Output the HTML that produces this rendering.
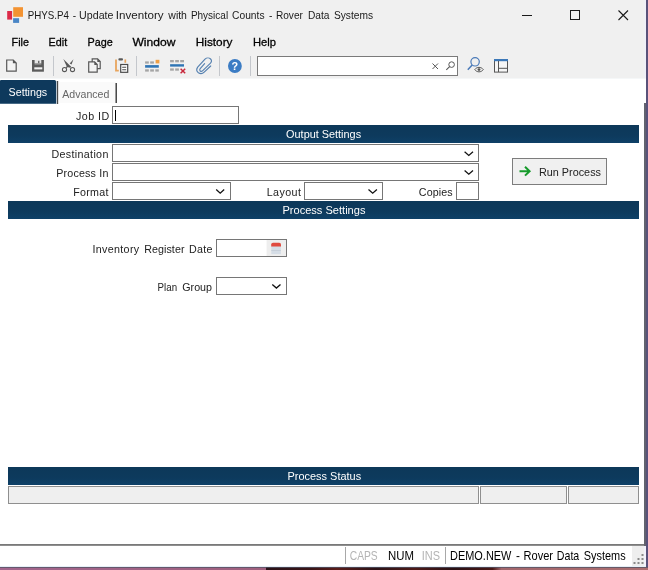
<!DOCTYPE html>
<html><head><meta charset="utf-8">
<style>
*{box-sizing:border-box;margin:0;padding:0}
html,body{width:648px;height:570px;overflow:hidden;background:#fff;font-family:"Liberation Sans",sans-serif;}
.abs{position:absolute}
#win{position:absolute;left:0;top:0;width:648px;height:570px;background:#fff;overflow:hidden}
.hdr{position:absolute;left:8px;width:631px;height:18px;background:linear-gradient(#0d3859 0%,#0d3a5d 60%,#0e4067 100%)}
.inp{position:absolute;background:#fff;border:1px solid #767676}
.sbox{position:absolute;top:486px;height:18px;background:#efefef;border:1px solid #8f8f8f}
.sep{position:absolute;top:56px;width:1px;height:20px;background:#c4c7cc}
</style></head><body>
<div id="win">
<div class="abs" style="left:0;top:0;width:646px;height:78px;background:#f0f0f0"></div>
<div class="abs" style="left:0;top:78px;width:646px;height:1px;background:#f5f7f8"></div>

<!-- tabs -->
<div class="abs" style="left:0;top:80px;width:56px;height:24px;background:linear-gradient(#0e395c 0,#0e395c 96%,#86a0b4 100%);border-radius:1px 1.5px 0 0"></div>
<div class="abs" style="left:56px;top:81px;width:3px;height:23px;background:linear-gradient(90deg,#b9c6d2 0,#b9c6d2 26%,#3c3c3c 27%,#505050 66%,#d0d0d0 67%,#ececec 100%)"></div>
<div class="abs" style="left:59px;top:82px;width:57px;height:21px;background:#fafafa"></div>
<div class="abs" style="left:115px;top:83px;width:2px;height:20px;background:linear-gradient(90deg,#9a9a9a 0,#9a9a9a 40%,#4a4a4a 41%,#4a4a4a 100%)"></div>

<!-- toolbar search -->
<div class="inp" style="left:257px;top:56px;width:201px;height:20px;border-color:#7a7a7a"></div>
<div class="sep" style="left:53px"></div>
<div class="sep" style="left:136px"></div>
<div class="sep" style="left:219px"></div>
<div class="sep" style="left:250px"></div>

<!-- Job ID -->
<div class="inp" style="left:112px;top:106px;width:127px;height:18px"></div>
<div class="abs" style="left:115px;top:110px;width:1px;height:11px;background:#000"></div>

<div class="hdr" style="top:125px"></div>
<div class="inp" style="left:112px;top:144px;width:367px;height:18px"></div>
<div class="inp" style="left:112px;top:163px;width:367px;height:18px"></div>
<div class="inp" style="left:112px;top:182px;width:119px;height:18px"></div>
<div class="inp" style="left:304px;top:182px;width:79px;height:18px"></div>
<div class="inp" style="left:456px;top:182px;width:23px;height:18px"></div>

<!-- Run process -->
<div class="abs" style="left:512px;top:158px;width:95px;height:27px;background:#f0f0f0;border:1px solid #7d7d7d"></div>

<div class="hdr" style="top:201px"></div>
<div class="inp" style="left:216px;top:239px;width:71px;height:18px"></div>
<div class="inp" style="left:216px;top:277px;width:71px;height:18px"></div>

<div class="hdr" style="top:467px"></div>
<div class="sbox" style="left:8px;width:471px"></div>
<div class="sbox" style="left:480px;width:87px"></div>
<div class="sbox" style="left:568px;width:71px"></div>

<!-- status bar -->
<div class="abs" style="left:0;top:544px;width:646px;height:2px;background:linear-gradient(#6e6e6e,#9a9a9a)"></div>
<div class="abs" style="left:345px;top:547px;width:1px;height:17px;background:#a8a8a8"></div>
<div class="abs" style="left:445px;top:547px;width:1px;height:17px;background:#a8a8a8"></div>
<div class="abs" style="left:632px;top:546px;width:12px;height:20px;background:#eeeeee"></div>

<!-- right border -->
<div class="abs" style="left:643px;top:0;width:3px;height:78px;background:linear-gradient(90deg,#f0f0f0,#eef0fa)"></div>
<div class="abs" style="left:646px;top:0;width:2px;height:570px;background:#59527a"></div>
<div class="abs" style="left:644px;top:103px;width:2px;height:443px;background:#62636f"></div>
<div class="abs" style="left:644px;top:546px;width:2px;height:21px;background:#f1f2fb"></div>
<!-- bottom -->
<div class="abs" style="left:0;top:566px;width:646px;height:1px;background:#e6eff7"></div>
<div class="abs" style="left:0;top:567px;width:648px;height:3px;background:linear-gradient(90deg,#a3658c 0,#a0607e 41%,#2a1218 41%,#3a1416 48%,#5a1c1a 52%,#2c1216 58%,#4e1a18 64%,#2a1014 70%,#4a1816 76%,#a3666c 77.4%,#ac6e70 100%)"></div>
<div class="abs" style="left:0;top:567px;width:648px;height:1px;background:rgba(80,84,100,0.75)"></div>

<svg class="abs" style="left:0;top:0;will-change:transform" width="648" height="570" viewBox="0 0 648 570">
<!-- logo -->
<rect x="13.2" y="7.2" width="9.8" height="9.6" fill="#f39332"/>
<rect x="7.2" y="11" width="4.9" height="8.6" fill="#dc2a48"/>
<rect x="13.1" y="18.2" width="6" height="4.7" fill="#4a86c6"/>
<!-- window controls -->
<path d="M522 15.5H532" stroke="#1a1a1a" stroke-width="1" fill="none"/>
<rect x="570.5" y="10.5" width="9" height="9" stroke="#1a1a1a" stroke-width="1" fill="none"/>
<path d="M618.5 10.5L628 20M628 10.5L618.5 20" stroke="#1a1a1a" stroke-width="1.1" fill="none"/>

<!-- new doc -->
<path d="M6.7 60H13.2L16.2 63V71.1H6.7Z" fill="#f4f4f4" stroke="#585858" stroke-width="1.2"/>
<path d="M12.9 59.6V63.3H16.6Z" fill="#585858"/>
<!-- save -->
<rect x="32" y="60" width="11.9" height="11.7" fill="#5c5c5c"/>
<rect x="34.6" y="60" width="6.7" height="3.6" fill="#e6e6e6"/>
<rect x="38.1" y="60.8" width="1.3" height="2.4" fill="#5c5c5c"/>
<rect x="34.6" y="63.6" width="6.7" height="1.2" fill="#8a8a8a"/>
<rect x="34.3" y="67.3" width="8" height="2.1" fill="#f2f2f2"/>
<!-- scissors -->
<path d="M63.3 59L71.2 66.7L70.3 67.8L67 66.9Z" fill="#585858"/>
<path d="M73.5 59.3L71.5 64.6L69.7 63.6Z" fill="#585858"/>
<path d="M68.4 65.8L66 67.7" stroke="#585858" stroke-width="1.1" fill="none"/>
<g fill="none" stroke="#585858" stroke-width="1.05">
<circle cx="64.5" cy="69.5" r="2.1"/><circle cx="72.5" cy="69.5" r="2.1"/>
</g>
<!-- copy -->
<g fill="#f3f3f3" stroke="#585858" stroke-width="1.2">
<path d="M92.2 58.9H97.6L100.2 61.6V68.6H92.2Z"/>
<path d="M88.7 61.9H94.6L97.2 64.6V72.2H88.7Z"/>
</g>
<path d="M97.3 58.6V61.9H100.5Z" fill="#585858"/>
<path d="M94.3 61.6V64.9H97.5Z" fill="#585858"/>
<!-- paste -->
<path d="M116 59.4V70.6H118.8" fill="none" stroke="#e8a55e" stroke-width="1.8"/>
<path d="M125.3 59.4V62.8" fill="none" stroke="#e8a55e" stroke-width="1.7"/>
<rect x="118.4" y="58.2" width="4.6" height="2.4" rx="1" fill="#5a5a5a"/>
<rect x="120.7" y="64.5" width="7" height="7.8" fill="#fff" stroke="#4a4a4a" stroke-width="1.2"/>
<path d="M122.2 67.2H126.2M122.2 69.8H126.2" stroke="#4a4a4a" stroke-width="1.1"/>
<!-- insert row -->
<g fill="#a5a5a5">
<rect x="145.1" y="61.4" width="3.7" height="2.2"/><rect x="150.2" y="61.4" width="3.7" height="2.2"/>
<rect x="145.1" y="69.3" width="3.7" height="2.3"/><rect x="150.2" y="69.3" width="3.7" height="2.3"/><rect x="155.3" y="69.3" width="3.5" height="2.3"/>
</g>
<rect x="145.1" y="65.1" width="13.7" height="2.6" fill="#2f75b5"/>
<rect x="155.6" y="59.8" width="3.8" height="3.6" fill="#f0a046"/>
<!-- delete row -->
<g fill="#a5a5a5">
<rect x="170.1" y="60" width="3.7" height="2.3"/><rect x="175.2" y="60" width="3.7" height="2.3"/><rect x="180.2" y="60" width="3.8" height="2.3"/>
<rect x="170.1" y="68.4" width="3.7" height="2.3"/><rect x="175.2" y="68.4" width="3.7" height="2.3"/>
</g>
<rect x="170.1" y="64.2" width="13.9" height="2.4" fill="#2f75b5"/>
<path d="M180.6 68.8L185.2 73.2M185.2 68.8L180.6 73.2" stroke="#c8283c" stroke-width="1.5" fill="none"/>
<!-- paperclip -->
<path d="M210.7 66L204.2 72.1C202.6 73.8 200.2 74 198.4 72.8C196.6 71.4 196.4 69 197.7 67.1L205 59.1C206.6 57.6 209.2 57.6 210.6 59C211.8 60.2 211.8 62 210.5 63.1L202.5 70.8C201.6 71.7 200.4 71.6 200 70.8C199.5 70 199.7 69.2 200.2 68.5L204.6 63.7" fill="none" stroke="#5580b0" stroke-width="1.15" stroke-linecap="round"/>
<!-- help -->
<circle cx="234.9" cy="66" r="6.9" fill="#3b7cc4"/>
<text x="234.9" y="69.8" font-family="'Liberation Sans', sans-serif" font-weight="bold" font-size="10.8" fill="#fff" text-anchor="middle">?</text>
<!-- search x & magnifier -->
<path d="M432.5 63.5L438 69M438 63.5L432.5 69" stroke="#555" stroke-width="1" fill="none"/>
<circle cx="451.6" cy="64.6" r="2.8" fill="none" stroke="#555" stroke-width="1"/>
<path d="M449.6 66.6L446.3 69.8" stroke="#555" stroke-width="1.1"/>
<!-- find/eye -->
<circle cx="475.1" cy="61.8" r="4.2" fill="none" stroke="#4a7ab8" stroke-width="1.2"/>
<path d="M472.2 64.9L467.8 69.8" stroke="#4a7ab8" stroke-width="1.5"/>
<path d="M474.8 69.6C476.8 66.6 481.2 66.6 483.3 69.6C481.2 72.6 476.8 72.6 474.8 69.6Z" fill="#f0f0f0" stroke="#555" stroke-width="1"/>
<circle cx="479" cy="69.6" r="1.4" fill="#555"/>
<!-- layout -->
<rect x="494.5" y="59.5" width="13" height="12.6" fill="#f6f6f6" stroke="#555" stroke-width="1"/>
<rect x="494" y="59" width="14" height="2.2" fill="#3c78b8"/>
<path d="M498.5 61V72M498.5 68.3H507.5" stroke="#555" stroke-width="1" fill="none"/>

<!-- dropdown chevrons -->
<g fill="none" stroke="#111" stroke-width="1.3">
<path d="M464.6 151.8L468.8 155.4L473 151.8"/>
<path d="M464.6 170.6L468.8 174.2L473 170.6"/>
<path d="M216.2 189.6L220.2 193.2L224.2 189.6"/>
<path d="M368.5 189.6L372.7 193.2L376.9 189.6"/>
<path d="M272.3 284.5L276.4 288.1L280.5 284.5"/>
</g>
<!-- calendar -->
<rect x="266.6" y="240" width="19.4" height="16" fill="#eeeeee"/>
<rect x="271.3" y="246" width="9.6" height="8.1" fill="#d5dde6"/>
<rect x="271.3" y="250" width="9.6" height="0.8" fill="#c3ccd6"/>
<path d="M271.2 246.6V244.6Q271.2 242.8 273 242.8H279.2Q281 242.8 281 244.6V246.6Z" fill="#e04a3f"/>
<!-- run arrow -->
<path d="M519.5 171.2H529M525 166.8L529.6 171.2L525 175.6" fill="none" stroke="#169a2b" stroke-width="2"/>
<!-- grip dots -->
<g fill="#8a8a8a">
<rect x="633.5" y="562" width="2" height="2"/><rect x="637.5" y="562" width="2" height="2"/><rect x="641.5" y="562" width="2" height="2"/>
<rect x="637.5" y="558" width="2" height="2"/><rect x="641.5" y="558" width="2" height="2"/>
<rect x="641.5" y="554" width="2" height="2"/>
</g>
</svg>

<svg class="abs" style="left:0;top:0;will-change:transform" width="648" height="570" viewBox="0 0 648 570" font-family="'Liberation Sans', sans-serif">
<text transform="translate(27.80,18.80) scale(0.8643,1)" font-size="11.3" fill="#1a1a1a">PHYS.P4</text>
<text transform="translate(72.70,18.80) scale(0.9000,1)" font-size="11.3" fill="#1a1a1a">-</text>
<text transform="translate(79.10,18.80) scale(0.9434,1)" font-size="11.3" fill="#1a1a1a">Update</text>
<text transform="translate(115.87,18.80) scale(1.0280,1)" font-size="11.3" fill="#1a1a1a">Inventory</text>
<text transform="translate(168.33,18.80) scale(0.9276,1)" font-size="11.3" fill="#1a1a1a">with</text>
<text transform="translate(190.90,18.80) scale(0.8856,1)" font-size="11.3" fill="#1a1a1a">Physical</text>
<text transform="translate(232.10,18.80) scale(0.9074,1)" font-size="11.3" fill="#1a1a1a">Counts</text>
<text transform="translate(269.10,18.80) scale(0.9000,1)" font-size="11.3" fill="#1a1a1a">-</text>
<text transform="translate(275.90,18.80) scale(0.8956,1)" font-size="11.3" fill="#1a1a1a">Rover</text>
<text transform="translate(307.90,18.80) scale(0.9032,1)" font-size="11.3" fill="#1a1a1a">Data</text>
<text transform="translate(333.90,18.80) scale(0.9046,1)" font-size="11.3" fill="#1a1a1a">Systems</text>
<text transform="translate(11.60,45.60) scale(0.9153,1)" font-size="11.8" fill="#000" stroke="#000" stroke-width="0.3">File</text>
<text transform="translate(48.60,45.60) scale(0.9121,1)" font-size="11.8" fill="#000" stroke="#000" stroke-width="0.3">Edit</text>
<text transform="translate(87.50,45.60) scale(0.9182,1)" font-size="11.8" fill="#000" stroke="#000" stroke-width="0.3">Page</text>
<text transform="translate(132.40,45.60) scale(1.0250,1)" font-size="11.8" fill="#000" stroke="#000" stroke-width="0.3">Window</text>
<text transform="translate(195.80,45.60) scale(0.9998,1)" font-size="11.8" fill="#000" stroke="#000" stroke-width="0.3">History</text>
<text transform="translate(253.00,45.60) scale(0.9473,1)" font-size="11.8" fill="#000" stroke="#000" stroke-width="0.3">Help</text>
<text transform="translate(8.60,95.80) scale(0.9306,1)" font-size="11.5" fill="#fff">Settings</text>
<text transform="translate(62.30,97.80) scale(0.9201,1)" font-size="11.5" fill="#666">Advanced</text>
<text x="76.00" y="120.10" letter-spacing="0.466" font-size="10.7" fill="#222">Job ID</text>
<text x="51.40" y="157.60" letter-spacing="0.348" font-size="10.7" fill="#222">Destination</text>
<text x="56.30" y="176.60" letter-spacing="0.173" font-size="10.7" fill="#222">Process In</text>
<text x="73.30" y="195.80" letter-spacing="0.244" font-size="10.7" fill="#222">Format</text>
<text x="266.70" y="195.80" letter-spacing="0.436" font-size="10.7" fill="#222">Layout</text>
<text x="418.80" y="195.80" letter-spacing="0.115" font-size="10.7" fill="#222">Copies</text>
<text x="92.50" y="253.00" letter-spacing="0.335" font-size="10.7" fill="#222">Inventory</text>
<text x="144.20" y="253.00" letter-spacing="0.066" font-size="10.7" fill="#222">Register</text>
<text x="189.00" y="253.00" letter-spacing="0.256" font-size="10.7" fill="#222">Date</text>
<text transform="translate(157.60,291.00) scale(0.9092,1)" font-size="10.7" fill="#222">Plan</text>
<text x="182.30" y="291.00" letter-spacing="-0.015" font-size="10.7" fill="#222">Group</text>
<text transform="translate(286.10,137.80) scale(0.9224,1)" font-size="11.8" fill="#fff">Output Settings</text>
<text transform="translate(282.40,213.80) scale(0.9389,1)" font-size="11.8" fill="#fff">Process Settings</text>
<text transform="translate(287.50,479.90) scale(0.9290,1)" font-size="11.8" fill="#fff">Process Status</text>
<text transform="translate(538.90,175.60) scale(0.9443,1)" font-size="11.5" fill="#222">Run Process</text>
<text transform="translate(349.70,559.70) scale(0.8519,1)" font-size="12.1" fill="#b4b4b4">CAPS</text>
<text transform="translate(388.10,559.70) scale(0.9429,1)" font-size="12.1" fill="#000">NUM</text>
<text transform="translate(421.79,559.70) scale(0.9061,1)" font-size="12.1" fill="#b4b4b4">INS</text>
<text transform="translate(450.10,559.70) scale(0.9030,1)" font-size="12.1" fill="#000">DEMO.NEW</text>
<text transform="translate(516.00,559.70) scale(0.9750,1)" font-size="12.1" fill="#000">-</text>
<text transform="translate(523.50,559.70) scale(0.9152,1)" font-size="12.1" fill="#000">Rover</text>
<text transform="translate(556.80,559.70) scale(0.8792,1)" font-size="12.1" fill="#000">Data</text>
<text transform="translate(583.80,559.70) scale(0.9046,1)" font-size="12.1" fill="#000">Systems</text>
</svg>
</div>
</body></html>
